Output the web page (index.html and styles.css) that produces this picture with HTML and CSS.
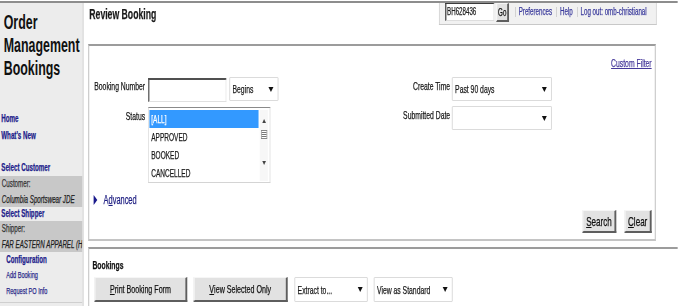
FILE: index.html
```html
<!DOCTYPE html>
<html>
<head>
<meta charset="utf-8">
<title>Review Booking</title>
<link rel="stylesheet" href="styles.css">
</head>
<body>
<div class="frame">
<div class="page">
  <aside class="side">
    <div class="brand">Order<br>Management<br>Bookings</div>
    <nav class="nav">
      <a class="nav-link">Home</a>
      <a class="nav-link">What's New</a>
      <a class="nav-link sel-cust">Select Customer</a>
      <div class="ctx">
        <div class="ctx-label">Customer:</div>
        <div class="ctx-val">Columbia Sportswear JDE</div>
      </div>
      <a class="nav-link sel-ship">Select Shipper</a>
      <div class="ctx">
        <div class="ctx-label">Shipper:</div>
        <div class="ctx-val">FAR EASTERN APPAREL (HO</div>
      </div>
      <a class="nav-link group">Configuration</a>
      <a class="sub-link">Add Booking</a>
      <a class="sub-link">Request PO Info</a>
      <div class="next"></div>
    </nav>
  </aside>
  <main class="main">
    <header class="head">
      <h1 class="title">Review Booking</h1>
      <div class="quick">
        <span class="quick-input">BH628436</span>
        <span class="btn go">Go</span>
        <span class="sep first">|</span>
        <a class="qlink">Preferences</a>
        <span class="sep">|</span>
        <a class="qlink">Help</a>
        <span class="sep">|</span>
        <a class="qlink">Log out: omb-christianal</a>
      </div>
    </header>

    <section class="filter">
      <div class="custom"><a class="custom-link">Custom Filter</a></div>
      <div class="form">
        <label class="lbl">Booking Number</label>
        <div class="field-row">
          <span class="text-input"></span>
          <span class="select begins"><span class="sel-text">Begins</span><span class="caret"></span></span>
        </div>
        <label class="lbl lbl-r">Create Time</label>
        <div class="field-row">
          <span class="select time"><span class="sel-text">Past 90 days</span><span class="caret"></span></span>
        </div>

        <label class="lbl lbl-status">Status</label>
        <div class="field-row">
          <div class="listbox">
            <div class="options">
              <div class="opt on">[ALL]</div>
              <div class="opt">APPROVED</div>
              <div class="opt">BOOKED</div>
              <div class="opt">CANCELLED</div>
            </div>
            <div class="scroll">
              <span class="arr up"></span>
              <span class="thumb"></span>
              <span class="arr down"></span>
            </div>
          </div>
        </div>
        <label class="lbl lbl-r">Submitted Date</label>
        <div class="field-row">
          <span class="select time sub-date"><span class="sel-text"></span><span class="caret"></span></span>
        </div>
      </div>
      <div class="advanced"><span class="tri"></span><a class="adv-link">A<u>d</u>vanced</a></div>
      <div class="actions">
        <span class="btn act search"><u>S</u>earch</span>
        <span class="btn act clear"><u>C</u>lear</span>
      </div>
    </section>

    <section class="results">
      <h2 class="res-title">Bookings</h2>
      <div class="toolbar">
        <span class="btn tool print"><u>P</u>rint Booking Form</span>
        <span class="btn tool viewsel"><u>V</u>iew Selected Only</span>
        <span class="select extract"><span class="sel-text">Extract to...</span><span class="caret"></span></span>
        <span class="select viewas"><span class="sel-text">View as Standard</span><span class="caret"></span></span>
      </div>
    </section>
  </main>
</div>
</div>
</body>
</html>
```
FILE: styles.css
```css
* { box-sizing: border-box; }

html, body { height: 100%; }

body {
  margin: 0;
  font-family: "Liberation Sans", Arial, sans-serif;
  font-size: 11px;
  color: #161616;
  background: #fff;
  overflow: hidden;
}

a { text-decoration: none; cursor: pointer; }

.frame {
  width: 678px;
  height: 306px;
  overflow: hidden;
}

/* The original UI is rendered horizontally condensed; the whole
   page is laid out at its natural width and squeezed on the x axis. */
.page {
  width: 1093px;
  margin-top: 1px;
  border-top: 2px solid #8d8d8d;
  display: flex;
  height: 305px;
  overflow: hidden;
  transform: scaleX(0.62);
  transform-origin: 0 0;
  -webkit-text-stroke: 0.25px currentColor;
}

/* ---------- sidebar ---------- */
.side {
  width: 135px;
  flex: none;
  background: #ececec;
  border-right: 2px solid #dcdcdc;
  overflow: hidden;
}

.brand {
  font-weight: bold;
  font-size: 20px;
  line-height: 23px;
  padding: 8px 0 0 6px;
  color: #111;
  -webkit-text-stroke: 0;
}

.nav { margin-top: 30px; }

.nav-link {
  display: block;
  font-weight: bold;
  font-size: 10px;
  color: #20208a;
  line-height: 17px;
  padding-left: 2px;
  white-space: nowrap;
}

.sel-cust { margin-top: 16px; line-height: 16px; }
.sel-ship { line-height: 14px; }

.ctx {
  background: #c8c8c8;
  padding-left: 3px;
  white-space: nowrap;
  overflow: hidden;
  font-size: 10px;
}
.ctx-label { color: #333; line-height: 16px; }
.ctx-val { font-style: italic; color: #1e1e1e; line-height: 15px; }

.group { padding-left: 10px; line-height: 15px; }
.sub-link {
  display: block;
  padding-left: 10px;
  color: #2a2a8a;
  font-size: 9px;
  line-height: 16px;
  white-space: nowrap;
}
.next { margin-top: 3px; border-top: 1px solid #cfcfcf; height: 8px; }

/* ---------- main ---------- */
.main {
  flex: 1;
  min-width: 0;
  padding-left: 7px;
}

.head {
  height: 41px;
  display: flex;
  justify-content: space-between;
  align-items: flex-start;
}

.title {
  margin: 0;
  padding: 3px 0 0 2px;
  font-size: 14px;
  line-height: 17px;
  font-weight: bold;
  color: #1a1a1a;
}

.quick {
  margin-right: 34px;
  width: 351px;
  height: 22px;
  background: #f1f1f1;
  border: 1px solid #c8c8c8;
  border-top: none;
  display: flex;
  align-items: flex-start;
  padding-left: 9px;
  font-size: 10px;
}

.quick-input {
  width: 79px;
  height: 18px;
  background: #fff;
  border-top: 1px solid #3c3c3c;
  border-left: 2px solid #3c3c3c;
  border-right: 1px solid #ddd;
  border-bottom: 1px solid #ddd;
  font-size: 10px;
  line-height: 16px;
  padding-left: 1px;
  color: #222;
}

.btn {
  display: inline-flex;
  align-items: center;
  justify-content: center;
  background: #e2e2e2;
  border-top: 1px solid #f6f6f6;
  border-left: 2px solid #f6f6f6;
  border-right: 3px solid #5e5e5e;
  border-bottom: 2px solid #5e5e5e;
  color: #111;
  white-space: nowrap;
}

.go {
  width: 21px;
  height: 19px;
  margin-left: 3px;
  font-size: 10px;
}

.sep {
  color: #b8b8b8;
  margin: 0 4px 0 6px;
  line-height: 18px;
  -webkit-text-stroke: 0;
}
.sep.first { margin-left: 9px; }
.qlink {
  color: #3a3a9c;
  line-height: 18px;
  white-space: nowrap;
}

/* ---------- filter panel ---------- */
.filter {
  margin-right: 35px;
  border-left: 2px solid #cdcdcd;
  border-right: 2px solid #cdcdcd;
  border-top: 2px solid #9c9c9c;
  border-bottom: 2px solid #c4c4c4;
  padding: 0 5px 6px 0;
}

.custom {
  margin-top: 10px;
  text-align: right;
  line-height: 14px;
}
.custom-link {
  color: #45389a;
  text-decoration: underline;
}

.form {
  margin-top: 8px;
  display: grid;
  grid-template-columns: 95px 361px 129px 1fr;
  row-gap: 5px;
}

.lbl {
  text-align: right;
  padding-right: 5px;
  padding-top: 2px;
  line-height: 13px;
  white-space: nowrap;
}
.lbl-r { padding-right: 3px; }
.lbl-status { padding-top: 3px; }

.field-row {
  display: flex;
  align-items: flex-start;
}

.text-input {
  width: 126px;
  height: 24px;
  background: #fff;
  border-top: 2px solid #505050;
  border-left: 2px solid #505050;
  border-right: 1px solid #e0e0e0;
  border-bottom: 1px solid #e0e0e0;
}

.select {
  display: flex;
  align-items: center;
  justify-content: space-between;
  height: 24px;
  background: #fff;
  border: 1px solid #d2d2d2;
  border-radius: 1px;
  padding: 0 7px 0 4px;
  color: #1a1a1a;
  white-space: nowrap;
}
.caret {
  width: 0;
  height: 0;
  border-left: 4px solid transparent;
  border-right: 4px solid transparent;
  border-top: 5px solid #111;
  flex: none;
}
.begins { width: 79px; margin-left: 5px; margin-top: -1px; }
.time { width: 161px; margin-top: -1px; }

.listbox {
  width: 197px;
  height: 76px;
  display: flex;
  border: 1px solid #d4d4d4;
  border-top: 1px solid #8a8a8a;
  background: #fff;
  padding: 2px 3px 1px 1px;
}
.options { flex: 1; }
.opt {
  height: 18px;
  line-height: 18px;
  padding-left: 3px;
  font-size: 10.5px;
  color: #1a1a1a;
  white-space: nowrap;
}
.opt.on { background: #3399ff; color: #fff; }

.scroll {
  width: 13px;
  margin-left: 2px;
  display: flex;
  flex-direction: column;
  align-items: center;
  background: #f7f7f7;
}
.arr {
  width: 0;
  height: 0;
  border-left: 3px solid transparent;
  border-right: 3px solid transparent;
}
.arr.up { margin-top: 9px; border-bottom: 4px solid #444; }
.arr.down { margin-top: 22px; border-top: 4px solid #444; }
.thumb {
  margin-top: 7px;
  width: 10px;
  height: 9px;
  border: 1px solid #888;
  background: repeating-linear-gradient(#fff 0 1px, #777 1px 2px);
}

.advanced {
  margin-top: 10px;
  display: flex;
  align-items: center;
  padding-left: 7px;
  line-height: 14px;
}
.tri {
  width: 0;
  height: 0;
  border-top: 5px solid transparent;
  border-bottom: 5px solid transparent;
  border-left: 6px solid #1a1a8c;
  margin-right: 10px;
}
.adv-link { color: #1c1c80; font-size: 12px; }

.actions {
  margin-top: 3px;
  display: flex;
  justify-content: flex-end;
  gap: 13px;
}
.act { height: 23px; font-size: 13px; }
.search { width: 55px; }
.clear { width: 44px; }

/* ---------- results ---------- */
.results {
  margin-top: 6px;
  border-top: 2px solid #9c9c9c;
  border-left: 2px solid #cdcdcd;
  padding-left: 5px;
  height: 70px;
}
.res-title {
  margin: 9px 0 0 0;
  font-size: 11px;
  line-height: 14px;
  font-weight: bold;
  color: #111;
}
.toolbar {
  margin-top: 5px;
  margin-left: 3px;
  display: flex;
  align-items: flex-start;
}
.tool { height: 25px; font-size: 11.5px; }
.print { width: 150px; }
.viewsel { width: 152px; margin-left: 10px; }
.extract { width: 118px; margin-left: 11px; height: 25px; }
.viewas { width: 127px; margin-left: 10px; height: 25px; }
```
